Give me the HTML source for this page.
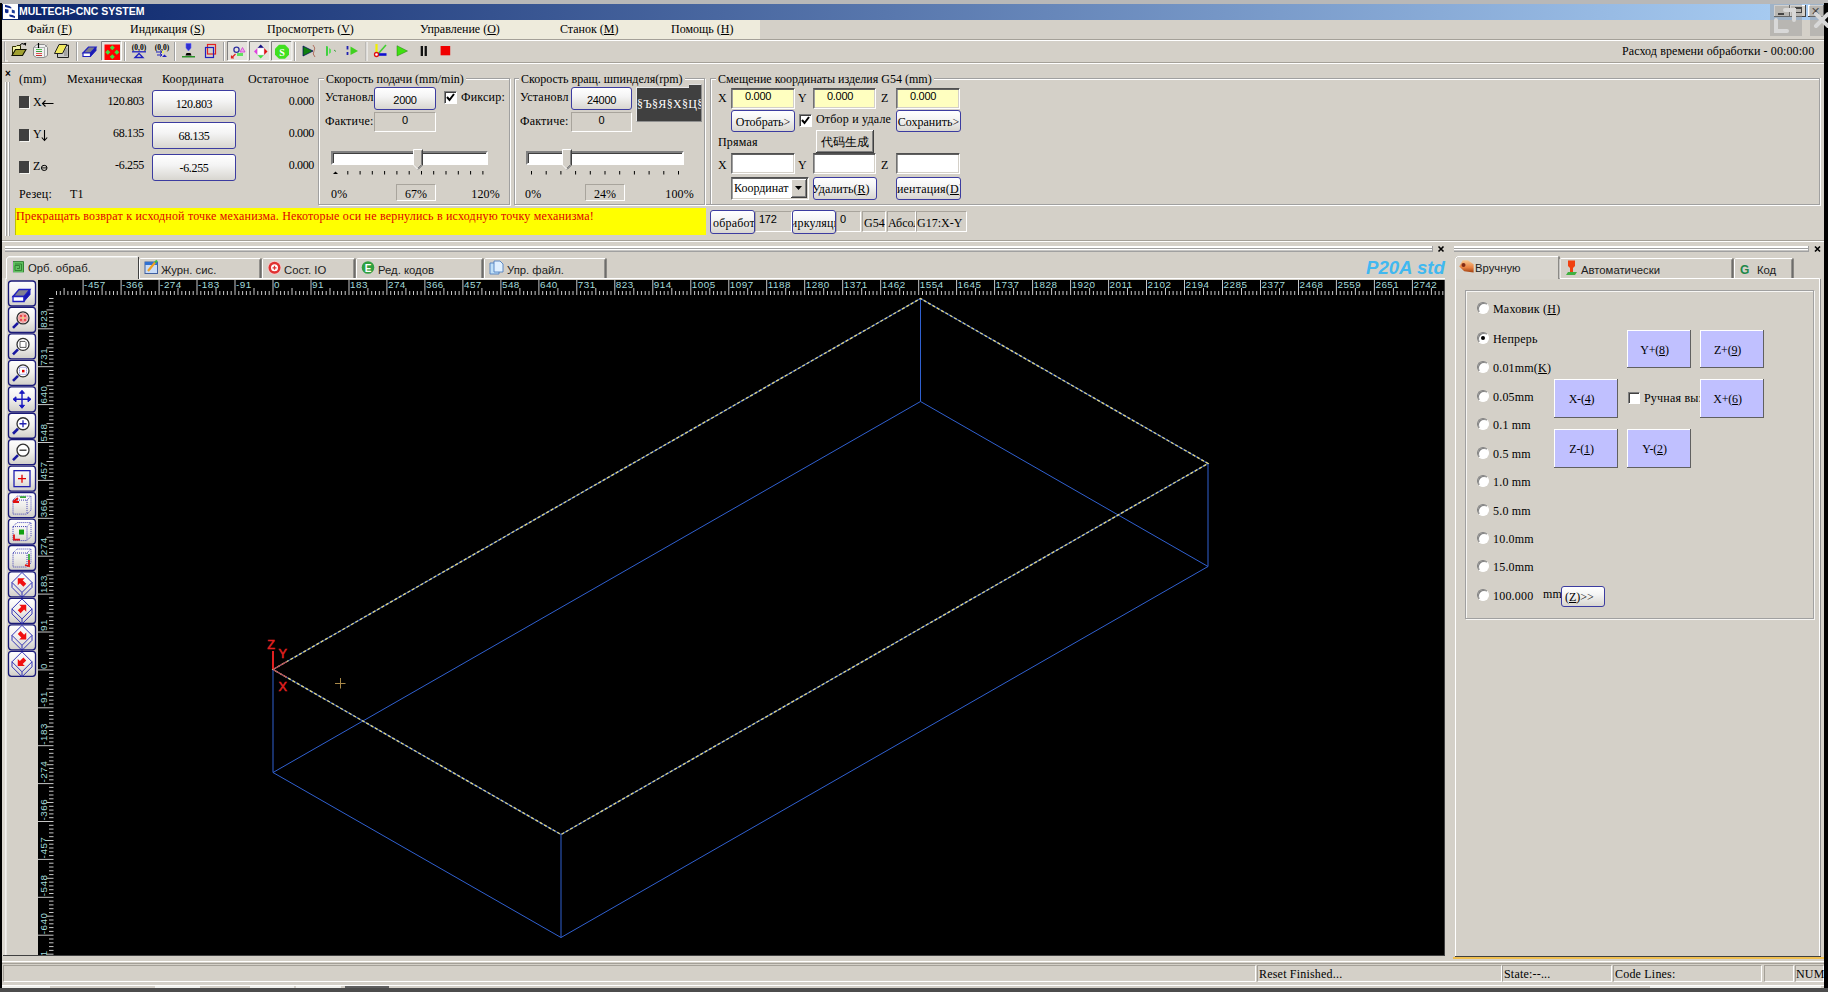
<!DOCTYPE html>
<html><head><meta charset="utf-8">
<style>
*{margin:0;padding:0;box-sizing:border-box}
html,body{width:1828px;height:992px;overflow:hidden;background:#D4D0C8;font-family:"Liberation Serif",serif;font-size:12px;color:#000;position:relative}
.a{position:absolute}
.s{font-family:"Liberation Sans",sans-serif}
.t{position:absolute;white-space:nowrap;line-height:12px;letter-spacing:0.2px}
.t.s{letter-spacing:0}
.hl{position:absolute;height:1px}
.vl{position:absolute;width:1px}
/* rounded blue button */
.rb{position:absolute;border:1px solid #3C3CA0;border-radius:3px;background:linear-gradient(#FFFFFF,#F4F4F4 40%,#D8D6D0);text-align:center;white-space:nowrap;overflow:hidden;line-height:12px}
/* flat sunken field */
.ff{position:absolute;border:1px solid;border-color:#A8A49C #FFFFFF #FFFFFF #A8A49C;text-align:center;white-space:nowrap;overflow:hidden}
/* sunken edit */
.ed{position:absolute;border:1px solid;border-color:#505050 #FFFFFF #FFFFFF #707070;box-shadow:inset 0 1px 0 #606060, inset 1px 0 0 #A0A0A0, inset -1px -1px 0 #D4D0C8;white-space:nowrap;overflow:hidden}
/* raised classic */
.rz{position:absolute;background:#D4D0C8;box-shadow:inset -1px -1px 0 #404040, inset 1px 1px 0 #FFFFFF, inset -2px -2px 0 #808080;text-align:center;white-space:nowrap;overflow:hidden}
/* group box */
.gb{position:absolute;border:1px solid #A0A0A0;box-shadow:1px 1px 0 #FFFFFF, inset 1px 1px 0 #FFFFFF}
.gt{position:absolute;background:#D4D0C8;padding:0 2px;white-space:nowrap;line-height:12px}
/* lavender jog buttons */
.jb{position:absolute;background:#C0C0FF;box-shadow:inset -1px -1px 0 #606060, inset 1px 1px 0 #FFFFFF;text-align:center;white-space:nowrap}
.radio{position:absolute;width:12px;height:12px;border-radius:50%;background:#fff;box-shadow:inset 1px 1px 0 #808080, inset -1px -1px 0 #FFFFFF;border:1px solid;border-color:#808080 #FFFFFF #FFFFFF #808080}
.cb{position:absolute;width:13px;height:13px;background:#fff;border:1px solid;border-color:#808080 #FFFFFF #FFFFFF #808080;box-shadow:inset 1px 1px 0 #404040}

</style></head><body>
<div class="a" style="left:0;top:0;width:1828px;height:4px;background:#B8B8B8"></div>
<div class="a" style="left:0;top:3px;width:2px;height:989px;background:#000"></div>
<div class="a" style="left:1824px;top:3px;width:4px;height:989px;background:#000"></div>
<div class="a" style="left:2px;top:4px;width:1822px;height:16px;background:linear-gradient(90deg,#0A246A 0px,#A6CAF0 1768px)"></div>
<svg class="a" style="left:3px;top:4px" width="15" height="15" viewBox="3 4 15 15"><rect x="3" y="4" width="15" height="15" fill="#fff"/><path d="M5 4.8 L9.5 6 L11.3 7.2 V8.6 L5 7 Z" fill="#102C90"/><path d="M5 9 L8.5 9.6 V12.6 L7 13.2 L5 12.5 Z" fill="#102C90"/><path d="M11.8 9.6 L14.8 10.4 V13.4 L11.8 12.8 Z" fill="#1A3C98"/><path d="M9.2 14.4 L12.5 15 L15 16.2 V18 L9.6 16.6 Z" fill="#102C90"/></svg>
<div class="t s" style="left:19px;top:6px;color:#fff;font-weight:bold;font-size:10.5px;line-height:11px">MULTECH&gt;CNC SYSTEM</div>
<!-- window buttons -->
<div class="a" style="left:1774px;top:5px;width:16px;height:12px;background:#D4D0C8;box-shadow:inset -1px -1px 0 #404040, inset 1px 1px 0 #fff"></div>
<div class="a" style="left:1778px;top:13px;width:6px;height:2px;background:#000"></div>
<div class="a" style="left:1790px;top:5px;width:16px;height:12px;background:#D4D0C8;box-shadow:inset -1px -1px 0 #404040, inset 1px 1px 0 #fff"></div>
<div class="a" style="left:1795px;top:7px;width:7px;height:6px;border:1px solid #000;border-top-width:2px"></div>
<div class="a" style="left:1808px;top:5px;width:16px;height:12px;background:#D4D0C8;box-shadow:inset -1px -1px 0 #404040, inset 1px 1px 0 #fff"></div>
<div class="t s" style="left:1811px;top:5px;font-size:11px;line-height:12px">✕</div>
<!-- overlay restore icon -->
<div class="a" style="left:1770px;top:4px;width:32px;height:32px;background:rgba(150,150,150,0.45)"></div>
<div class="a" style="left:1810px;top:4px;width:14px;height:32px;background:rgba(150,150,150,0.45)"></div>
<svg class="a" style="left:1770px;top:4px;z-index:5" width="58" height="32" viewBox="0 0 58 32"><path d="M6 16 V27 H17 M15 6 H24 V16" stroke="#D8D8D8" stroke-width="4" fill="none" stroke-linecap="round"/><path d="M46 10 L58 22 M58 10 L46 22" stroke="#D8D8D8" stroke-width="4" stroke-linecap="round"/></svg>
<!-- menu bar -->
<div class="a" style="left:2px;top:20px;width:758px;height:19px;background:#EEEBDC"></div>
<div class="hl" style="left:2px;top:39px;width:1822px;background:#A4A098"></div>
<div class="hl" style="left:2px;top:40px;width:1822px;background:#FFFFFF"></div>
<div class="t" style="left:27px;top:23px;letter-spacing:0">Файл (<u>F</u>)</div>
<div class="t" style="left:130px;top:23px;letter-spacing:0">Индикация (<u>S</u>)</div>
<div class="t" style="left:267px;top:23px;letter-spacing:0">Просмотреть (<u>V</u>)</div>
<div class="t" style="left:420px;top:23px;letter-spacing:0">Управление (<u>O</u>)</div>
<div class="t" style="left:560px;top:23px;letter-spacing:0">Станок (<u>M</u>)</div>
<div class="t" style="left:671px;top:23px;letter-spacing:0">Помощь (<u>H</u>)</div>
<!-- toolbar lines -->
<div class="hl" style="left:2px;top:62px;width:1822px;background:#A4A098"></div>
<div class="hl" style="left:2px;top:63px;width:1822px;background:#FFFFFF"></div>
<div class="t" style="left:1622px;top:45px;letter-spacing:0.1px">Расход времени обработки - 00:00:00</div>
<!-- viewport -->
<div class="a" style="left:38px;top:280px;width:1406px;height:675px;background:#000"></div>
<div class="a" style="left:0;top:988px;width:1828px;height:4px;background:#4C4C4C"></div>
<svg class="a" style="left:0;top:40px" width="470" height="24" viewBox="0 40 470 24">
<!-- grip -->
<path d="M5 42 V61 H8" stroke="#FFFFFF" fill="none"/><path d="M4.5 41.5 V61.5" stroke="#A0A0A0"/>
<!-- folder -->
<path d="M12.5 55 V46.5 H16 L17 45.5 H20.5 V50" fill="#F4F4A8" stroke="#303000" stroke-width="1"/>
<path d="M12 55.5 L15.5 49.5 H26 L22.5 55.5 Z" fill="#A0A030" stroke="#101000" stroke-width="1.1"/>
<path d="M19.5 45.5 Q22 42 24.5 44.5" stroke="#000" fill="none" stroke-width="1"/><path d="M23.5 43.2 L25.8 46 L26.2 42.8Z" fill="#000"/>
<!-- bin/printer -->
<path d="M33.5 47.5 L37 44.5 H44.5 L47.5 47.5 V55.5 L44.5 57.5 H36.5 L33.5 55.5 Z" fill="#F0F0F0" stroke="#8C8C8C" stroke-width="1"/>
<path d="M44.5 47.5 V57.5 M33.5 47.5 H44.5 L47.5 44.5" stroke="#A0A0A0" stroke-width="0.8" fill="none"/>
<path d="M36 49.5 H42" stroke="#50C050" stroke-width="1"/><path d="M36 51.5 H42" stroke="#40A040" stroke-width="1"/>
<path d="M36 53.5 H42" stroke="#E05050" stroke-width="1"/><path d="M36 55.5 H42" stroke="#C03030" stroke-width="1"/>
<path d="M38.5 43 V48" stroke="#000" stroke-width="1.2"/>
<!-- notepad -->
<path d="M57.5 49 V57.5 H68.5 V45 Z" fill="#C8C8C8" stroke="#202020" stroke-width="1"/>
<path d="M64 49 H67.5 M64 51 H67.5 M64 53 H67.5 M64 55 H67.5" stroke="#606060" stroke-width="0.7"/>
<path d="M54.5 53.5 L59 44.5 H67 L62.5 53.5 Z" fill="#F0E860" stroke="#202020" stroke-width="1"/>
<!-- separator -->
<path d="M76.5 42 V61" stroke="#A0A0A0"/><path d="M77.5 42 V61" stroke="#FFFFFF"/>
<!-- eraser -->
<path d="M83 53 L88.5 47 H96 L90.5 53 Z" fill="#7C7C8C" stroke="#2020C0" stroke-width="1.2"/>
<path d="M83 53 H90.5 V56.5 H83 Z" fill="#FFFFFF" stroke="#2020C0" stroke-width="1.2"/>
<path d="M90.5 53 L96 47 V50.5 L90.5 56.5 Z" fill="#1818B0" stroke="#2020C0" stroke-width="1"/>
<!-- pressed red -->
<rect x="101" y="41" width="20" height="20" fill="#E4E2DC"/>
<path d="M101.5 60.5 V41.5 H120.5" stroke="#808080" fill="none"/><path d="M101.5 60.5 H121.5 V41.5" stroke="#FFFFFF" fill="none"/>
<rect x="104.5" y="44.5" width="15.5" height="15.5" fill="#FF0000"/>
<path d="M112.3 45.3 L114.8 47.8 L112.3 50.3 L109.8 47.8Z M112.3 54.3 L114.8 56.8 L112.3 59.3 L109.8 56.8Z M107.8 49.8 L110.3 52.3 L107.8 54.8 L105.3 52.3Z M116.8 49.8 L119.3 52.3 L116.8 54.8 L114.3 52.3Z" fill="#40E040"/>
<!-- separator -->
<path d="M124.5 42 V61" stroke="#A0A0A0"/><path d="M125.5 42 V61" stroke="#FFFFFF"/>
<!-- (0,0) 1 -->
<text x="139" y="50" font-family="Liberation Serif" font-weight="bold" font-size="7.5" text-anchor="middle">(0,0)</text>
<path d="M132 51.8 H146" stroke="#2020C0" stroke-width="1.3"/>
<path d="M135 57.5 L139 53.5 L143 57.5 Z" fill="none" stroke="#2020C0" stroke-width="1.3"/>
<!-- (0,0) 2 -->
<text x="162" y="50" font-family="Liberation Serif" font-weight="bold" font-size="7.5" text-anchor="middle">(0,0)</text>
<path d="M156 52 H162 M160 50.5 L162 52 L160 53.5 M157 55 H162 M160 53.5 L162 55 L160 56.5" stroke="#2020C0" stroke-width="1" fill="none"/>
<path d="M162 57 L164.5 54.5 L167 57 Z" fill="#2020C0"/><circle cx="163" cy="52" r="1.2" fill="#F0F060"/>
<!-- separator -->
<path d="M174.5 42 V61" stroke="#A0A0A0"/><path d="M175.5 42 V61" stroke="#FFFFFF"/>
<!-- tool -->
<path d="M186 43.5 H191 V48 L188.5 51 L186 48 Z" fill="#3030D0" stroke="#6060FF" stroke-width="0.6"/>
<path d="M185.5 55.5 L186.5 53 H190.5 L191.5 55.5 Z" fill="#000"/>
<path d="M182 56.8 H195" stroke="#008000" stroke-width="1.2"/>
<!-- copy -->
<rect x="207.5" y="44.5" width="8" height="9.5" fill="none" stroke="#E02020" stroke-width="1.2"/>
<rect x="205.5" y="47.5" width="8" height="10" fill="none" stroke="#2020C0" stroke-width="1.2"/>
<!-- separator / grip -->
<path d="M223.5 42 V61" stroke="#A0A0A0"/><path d="M224.5 42 V61" stroke="#FFFFFF"/>
<!-- pressed group -->
<rect x="227" y="41" width="21" height="20" fill="#E4E2DC"/><path d="M227.5 60.5 V41.5 H247.5" stroke="#808080" fill="none"/><path d="M227.5 60.5 H248 V41" stroke="#FFFFFF" fill="none"/>
<rect x="249" y="41" width="21" height="20" fill="#E4E2DC"/><path d="M249.5 60.5 V41.5 H269.5" stroke="#808080" fill="none"/><path d="M249.5 60.5 H270 V41" stroke="#FFFFFF" fill="none"/>
<rect x="271" y="41" width="21" height="20" fill="#E4E2DC"/><path d="M271.5 60.5 V41.5 H291.5" stroke="#808080" fill="none"/><path d="M271.5 60.5 H292 V41" stroke="#FFFFFF" fill="none"/>
<circle cx="236.5" cy="49.8" r="2.6" fill="none" stroke="#3030A0" stroke-width="1.3"/>
<path d="M240 52 L242.5 47.5 L245 52 Z" fill="#F0A0F0" stroke="#D040D0" stroke-width="0.8"/>
<rect x="237" y="53" width="6" height="3" fill="#60E060"/>
<path d="M235.5 54 L231.5 58 M231.5 55.5 V58 H234" stroke="#E02020" stroke-width="1.2" fill="none"/>
<path d="M260.7 44.5 L264 48 H257.5 Z" fill="#101080"/>
<path d="M257.5 48 L254 51.5 L257.5 55 Z" fill="#E040E0"/>
<path d="M264 48 L267.5 51.5 L264 55 Z" fill="#E01010"/>
<path d="M257.5 55 H264 L260.7 58.5 Z" fill="#40E040"/>
<rect x="257.5" y="48" width="6.5" height="7" fill="#FFFFFF" stroke="#E0C0E0" stroke-width="0.5"/>
<path d="M279 44.8 H285 L289 48.8 V54.8 L285 58.8 H279 L275 54.8 V48.8 Z" fill="#40E020"/>
<text x="282" y="56" font-family="Liberation Serif" font-weight="bold" font-size="10" fill="#fff" text-anchor="middle">S</text>
<!-- separator -->
<path d="M294.5 42 V61" stroke="#A0A0A0"/><path d="M295.5 42 V61" stroke="#FFFFFF"/>
<!-- play wave -->
<path d="M303 46 L313 51 L303 56 Z" fill="#108010" stroke="#000060" stroke-width="0.7"/>
<path d="M313 45 Q316 48 314 51 Q312 54 315 57" stroke="#B07060" stroke-width="1" fill="none"/>
<!-- step -->
<path d="M326 46 L328 46.5 V55.5 L326 56 Z" fill="#40D040"/><path d="M329 48 L331 49.5 V52.5 L329 54Z" fill="#60E060"/><path d="M334 50 L336 51.5" stroke="#40A040"/>
<!-- dashed play -->
<path d="M347.5 46 V49.5 M347.5 52 V55" stroke="#2020B0" stroke-width="1.8"/>
<path d="M350.5 46.5 L358 51 L350.5 55 Z" fill="#40D020"/>
<!-- separator -->
<path d="M366 42 V61" stroke="#A0A0A0"/><path d="M367 42 V61" stroke="#FFFFFF"/>
<!-- axis -->
<path d="M376.5 44 V54" stroke="#F0F000" stroke-width="2.2"/>
<path d="M378 54 L386 45" stroke="#40D030" stroke-width="1.6"/>
<path d="M378 54.5 H386.5" stroke="#1010D0" stroke-width="2.6"/>
<circle cx="376.5" cy="54.5" r="2" fill="#fff" stroke="#E01010" stroke-width="1.3"/>
<!-- play -->
<path d="M397 45.7 L407.5 51 L397 56 Z" fill="#40E010" stroke="#208010" stroke-width="0.5"/>
<!-- pause -->
<rect x="420.7" y="46" width="2.3" height="10" fill="#101010"/><rect x="424.6" y="46" width="2.3" height="10" fill="#101010"/>
<!-- stop -->
<rect x="440.6" y="46" width="9.6" height="9.3" fill="#F00000"/>
</svg>
<div class="t s" style="left:5px;top:68px;font-size:10px;font-weight:bold">×</div>
<div class="vl" style="left:5px;top:82px;height:154px;background:#FFFFFF"></div>
<div class="vl" style="left:6px;top:82px;height:154px;background:#A0A0A0"></div>
<div class="vl" style="left:8px;top:82px;height:154px;background:#FFFFFF"></div>
<div class="vl" style="left:9px;top:82px;height:154px;background:#A0A0A0"></div>
<div class="t" style="left:19px;top:73px">(mm)</div>
<div class="t" style="left:67px;top:73px">Механическая</div>
<div class="t" style="left:162px;top:73px">Координата</div>
<div class="t" style="left:248px;top:73px">Остаточное</div>
<!-- rows -->
<div class="a" style="left:19px;top:96px;width:10px;height:12px;background:#404040;box-shadow:1px 1px 0 #F4F4F0"></div>
<div class="a" style="left:19px;top:129px;width:10px;height:12px;background:#404040;box-shadow:1px 1px 0 #F4F4F0"></div>
<div class="a" style="left:19px;top:161px;width:10px;height:12px;background:#404040;box-shadow:1px 1px 0 #F4F4F0"></div>
<div class="t" style="left:33px;top:96px">X</div><svg class="a" style="left:41px;top:98px" width="14" height="12"><path d="M1.5 5.5 H12.5 M4.5 2.5 L1.5 5.5 L4.5 8.5" stroke="#000" stroke-width="1.1" fill="none"/></svg>
<div class="t" style="left:33px;top:128px">Y</div><svg class="a" style="left:41px;top:129px" width="8" height="13"><path d="M3.5 1 V11.5 M0.8 8.5 L3.5 11.5 L6.2 8.5" stroke="#000" stroke-width="1.1" fill="none"/></svg>
<div class="t" style="left:33px;top:160px">Z</div><svg class="a" style="left:40px;top:164px" width="9" height="8"><ellipse cx="4.2" cy="3.9" rx="2.8" ry="2.6" stroke="#000" stroke-width="1" fill="none"/><path d="M1.5 3.9 H7" stroke="#000" stroke-width="0.9"/></svg>
<div class="t" style="left:84px;width:60px;text-align:right;top:95px;letter-spacing:-0.35px">120.803</div>
<div class="t" style="left:84px;width:60px;text-align:right;top:127px;letter-spacing:-0.35px">68.135</div>
<div class="t" style="left:84px;width:60px;text-align:right;top:159px;letter-spacing:-0.35px">-6.255</div>
<div class="rb" style="left:152px;top:90px;width:84px;height:27px;padding-top:7px;letter-spacing:-0.35px">120.803</div>
<div class="rb" style="left:152px;top:122px;width:84px;height:27px;padding-top:7px;letter-spacing:-0.35px">68.135</div>
<div class="rb" style="left:152px;top:154px;width:84px;height:27px;padding-top:7px;letter-spacing:-0.35px">-6.255</div>
<div class="t" style="left:254px;width:60px;text-align:right;top:95px;letter-spacing:-0.35px">0.000</div>
<div class="t" style="left:254px;width:60px;text-align:right;top:127px;letter-spacing:-0.35px">0.000</div>
<div class="t" style="left:254px;width:60px;text-align:right;top:159px;letter-spacing:-0.35px">0.000</div>
<div class="t" style="left:19px;top:188px">Резец:</div>
<div class="t" style="left:70px;top:188px">T1</div>
<!-- yellow message -->
<div class="a" style="left:15px;top:208px;width:691px;height:27px;background:#FFFF00;border-left:1px solid #C0C000"></div>
<div class="t" style="left:16px;top:210px;color:#E00000">Прекращать возврат к исходной точке механизма. Некоторые оси не вернулись в исходную точку механизма!</div>
<!-- main group right border -->
<div class="vl" style="left:1819px;top:78px;height:127px;background:#A0A0A0"></div>
<div class="vl" style="left:1820px;top:78px;height:127px;background:#FFFFFF"></div>
<div class="hl" style="left:960px;top:78px;width:860px;background:#A0A0A0"></div>
<div class="hl" style="left:960px;top:79px;width:860px;background:#FFFFFF"></div>
<div class="hl" style="left:706px;top:204px;width:1114px;background:#A0A0A0"></div>
<div class="hl" style="left:706px;top:205px;width:1114px;background:#FFFFFF"></div>
<!-- panel bottom line -->
<div class="hl" style="left:2px;top:240px;width:1822px;background:#A4A098"></div>
<div class="hl" style="left:2px;top:241px;width:1822px;background:#FFFFFF"></div>
<!-- feed group -->
<div class="gb" style="left:318px;top:78px;width:192px;height:127px"></div>
<div class="gt" style="left:324px;top:73px">Скорость подачи (mm/min)</div>
<div class="t" style="left:325px;top:91px">Установл</div>
<div class="rb" style="left:374px;top:87px;width:62px;height:23px;padding-top:6px;font-family:'Liberation Sans',sans-serif;font-size:11px;letter-spacing:-0.3px;">2000</div>
<div class="cb" style="left:444px;top:91px"></div>
<svg class="a" style="left:444px;top:91px" width="13" height="13"><path d="M3 6 L5.5 9 L10 3" stroke="#000" stroke-width="2" fill="none"/></svg>
<div class="t" style="left:461px;top:91px">Фиксир:</div>
<div class="t" style="left:325px;top:115px">Фактиче:</div>
<div class="ff" style="left:374px;top:112px;width:62px;height:20px;padding-top:1px;font-family:'Liberation Sans',sans-serif;font-size:11px;letter-spacing:-0.3px;">0</div>
<!-- slider1 -->
<div class="a" style="left:331px;top:151px;width:157px;height:14px;background:#fff;border:2px solid;border-color:#808080 #fff #fff #808080;box-shadow:inset 1px 1px 0 #404040"></div>
<svg class="a" style="left:412px;top:148px" width="13" height="24"><path d="M1.5 1.5 H10.5 V17 L6 21.5 L1.5 17 Z" fill="#D4D0C8" stroke="#fff"/><path d="M10.5 1.5 V17 L6 21.5" stroke="#404040" fill="none"/><path d="M9.5 2.5 V16.5 L6 20" stroke="#808080" fill="none"/></svg>
<svg class="a" style="left:330px;top:170px" width="160" height="6"><path d="M5.5 1.5 L3 4 H8 Z" fill="#000"/><path d="M17.8 1 V4.5 M30.1 1 V4.5 M42.3 1 V4.5 M54.6 1 V4.5 M66.9 1 V4.5 M79.2 1 V4.5 M91.5 1 V4.5 M103.7 1 V4.5 M116.0 1 V4.5 M128.3 1 V4.5 M140.6 1 V4.5 M152.9 1 V4.5" stroke="#000" stroke-width="1"/></svg>
<div class="t" style="left:331px;top:188px">0%</div>
<div class="ff" style="left:396px;top:184px;width:40px;height:17px;padding-top:2px">67%</div>
<div class="t" style="left:470px;width:30px;text-align:right;top:188px">120%</div>
<!-- spindle group -->
<div class="gb" style="left:514px;top:78px;width:191px;height:127px"></div>
<div class="gt" style="left:519px;top:73px">Скорость вращ. шпинделя(rpm)</div>
<div class="t" style="left:520px;top:91px">Установл</div>
<div class="rb" style="left:571px;top:87px;width:61px;height:23px;padding-top:6px;font-family:'Liberation Sans',sans-serif;font-size:11px;letter-spacing:-0.3px;">24000</div>
<div class="a" style="left:636px;top:87px;width:66px;height:35px;background:#404040;border:1px solid;border-color:#E8E8E8 #909090 #909090 #E8E8E8;overflow:hidden"><div class="t" style="left:0px;top:10px;color:#fff;letter-spacing:0.3px">§Ъ§Я§Х§Ц§</div></div><div class="a" style="left:689px;top:84px;width:13px;height:4px;background:#404040;border-top:1px solid #E0E0E0;border-right:1px solid #909090"></div>
<div class="t" style="left:520px;top:115px">Фактиче:</div>
<div class="ff" style="left:571px;top:112px;width:61px;height:20px;padding-top:1px;font-family:'Liberation Sans',sans-serif;font-size:11px;letter-spacing:-0.3px;">0</div>
<!-- slider2 -->
<div class="a" style="left:526px;top:151px;width:158px;height:14px;background:#fff;border:2px solid;border-color:#808080 #fff #fff #808080;box-shadow:inset 1px 1px 0 #404040"></div>
<svg class="a" style="left:561px;top:148px" width="13" height="24"><path d="M1.5 1.5 H10.5 V17 L6 21.5 L1.5 17 Z" fill="#D4D0C8" stroke="#fff"/><path d="M10.5 1.5 V17 L6 21.5" stroke="#404040" fill="none"/><path d="M9.5 2.5 V16.5 L6 20" stroke="#808080" fill="none"/></svg>
<svg class="a" style="left:526px;top:170px" width="160" height="6"><path d="M5.5 1 V4.5 M20.2 1 V4.5 M34.9 1 V4.5 M49.6 1 V4.5 M64.3 1 V4.5 M79.0 1 V4.5 M93.7 1 V4.5 M108.4 1 V4.5 M123.1 1 V4.5 M137.8 1 V4.5 M152.5 1 V4.5" stroke="#000" stroke-width="1"/></svg>
<div class="t" style="left:525px;top:188px">0%</div>
<div class="ff" style="left:585px;top:184px;width:40px;height:17px;padding-top:2px">24%</div>
<div class="t" style="left:660px;width:34px;text-align:right;top:188px">100%</div>
<!-- G54 group -->
<div class="gb" style="left:710px;top:78px;width:1110px;height:127px"></div>
<div class="gt" style="left:716px;top:73px">Смещение координаты изделия G54 (mm)</div>
<div class="t" style="left:718px;top:92px">X</div>
<div class="t" style="left:798px;top:92px">Y</div>
<div class="t" style="left:881px;top:92px">Z</div>
<div class="ed" style="left:731px;top:88px;width:64px;height:21px;background:#FFFFC0;padding:1px 0 0 13px;font-family:'Liberation Sans',sans-serif;font-size:11px;letter-spacing:-0.3px;">0.000</div>
<div class="ed" style="left:813px;top:88px;width:63px;height:21px;background:#FFFFC0;padding:1px 0 0 13px;font-family:'Liberation Sans',sans-serif;font-size:11px;letter-spacing:-0.3px;">0.000</div>
<div class="ed" style="left:896px;top:88px;width:64px;height:21px;background:#FFFFC0;padding:1px 0 0 13px;font-family:'Liberation Sans',sans-serif;font-size:11px;letter-spacing:-0.3px;">0.000</div>
<div class="rb" style="left:731px;top:110px;width:64px;height:22px;padding-top:5px">Отобрать&gt;</div>
<div class="cb" style="left:799px;top:114px"></div>
<svg class="a" style="left:799px;top:114px" width="13" height="13"><path d="M3 6 L5.5 9 L10 3" stroke="#000" stroke-width="2" fill="none"/></svg>
<div class="t" style="left:816px;top:113px">Отбор и удале</div>
<div class="rb" style="left:896px;top:110px;width:65px;height:22px;padding-top:5px">Сохранить&gt;</div>
<div class="t" style="left:718px;top:136px">Прямая</div>
<div class="rz" style="left:816px;top:130px;width:58px;height:23px;padding-top:4px;font-family:'Liberation Sans',sans-serif">代码生成</div>
<div class="t" style="left:718px;top:159px">X</div>
<div class="t" style="left:798px;top:159px">Y</div>
<div class="t" style="left:881px;top:159px">Z</div>
<div class="ed" style="left:731px;top:153px;width:64px;height:21px;background:#fff"></div>
<div class="ed" style="left:813px;top:153px;width:63px;height:21px;background:#fff"></div>
<div class="ed" style="left:896px;top:153px;width:64px;height:21px;background:#fff"></div>
<div class="ed" style="left:731px;top:177px;width:78px;height:23px;background:#fff;padding:3px 0 0 2px">Координат</div>
<div class="rz" style="left:791px;top:179px;width:16px;height:19px"></div>
<svg class="a" style="left:795px;top:186px" width="8" height="5"><path d="M0 0 H7 L3.5 4 Z" fill="#000"/></svg>
<div class="rb" style="left:813px;top:177px;width:64px;height:23px;padding-top:5px;text-align:left;text-indent:-2px">Удалить(<u>R</u>)</div>
<div class="rb" style="left:896px;top:177px;width:65px;height:23px"><span class="t" style="left:calc(50% - 6px);top:5px;transform:translateX(-50%)">Ориентация(<u>D</u>)</span></div>
<!-- bottom row -->
<div class="rb" style="left:710px;top:210px;width:45px;height:24px"><span class="t" style="left:2px;top:6px">обработки</span></div>
<div class="ff" style="left:755px;top:211px;width:37px;height:21px;text-align:left;padding:1px 0 0 3px;font-family:'Liberation Sans',sans-serif;font-size:11px;letter-spacing:-0.3px;">172</div>
<div class="rb" style="left:792px;top:210px;width:44px;height:24px"><span class="t" style="left:50%;top:6px;transform:translateX(-50%)">Циркуляция</span></div>
<div class="ff" style="left:836px;top:211px;width:25px;height:21px;text-align:left;padding:1px 0 0 3px;font-family:'Liberation Sans',sans-serif;font-size:11px;letter-spacing:-0.3px;">0</div>
<div class="ff" style="left:862px;top:211px;width:24px;height:21px;padding-top:4px;text-align:left;text-indent:1px">G54</div>
<div class="ff" style="left:887px;top:211px;width:29px;height:21px;padding-top:4px;text-align:left">Абсолют</div>
<div class="ff" style="left:916px;top:211px;width:51px;height:21px;padding-top:4px;text-align:left">G17:X-Y</div>
<svg class="a" style="left:0;top:242px" width="1828" height="16">
<rect x="5" y="4" width="1428" height="2" fill="#FFFFFF"/><rect x="5" y="6" width="1428" height="1" fill="#A0A0A0"/>
<rect x="5" y="7" width="1428" height="1.5" fill="#FFFFFF"/><rect x="5" y="8.5" width="1428" height="1.5" fill="#A0A0A0"/>
<rect x="1432" y="4" width="1" height="6" fill="#A0A0A0"/>
<rect x="1454" y="4" width="355" height="2" fill="#FFFFFF"/><rect x="1454" y="6" width="355" height="1" fill="#A0A0A0"/>
<rect x="1454" y="7" width="355" height="1.5" fill="#FFFFFF"/><rect x="1454" y="8.5" width="355" height="1.5" fill="#A0A0A0"/>
<rect x="1808" y="4" width="1" height="6" fill="#A0A0A0"/>
<path d="M1438.5 4.5 L1443.5 9.5 M1443.5 4.5 L1438.5 9.5" stroke="#000" stroke-width="1.6"/>
<path d="M1815 4.5 L1820 9.5 M1820 4.5 L1815 9.5" stroke="#000" stroke-width="1.6"/>
</svg>
<svg class="a" style="left:38px;top:280px" width="1406" height="675" viewBox="38 280 1406 675">
<rect x="38" y="280" width="1406" height="675" fill="#000"/>
<path d="M56.5 291 V295 M60.3 291 V295 M64.1 288 V295 M67.9 291 V295 M71.7 291 V295 M75.5 291 V295 M79.3 291 V295 M83.1 280 V295 M86.9 291 V295 M90.7 291 V295 M94.5 291 V295 M98.3 291 V295 M102.1 288 V295 M105.9 291 V295 M109.7 291 V295 M113.5 291 V295 M117.3 291 V295 M121.1 280 V295 M124.9 291 V295 M128.7 291 V295 M132.5 291 V295 M136.3 291 V295 M140.1 288 V295 M143.9 291 V295 M147.7 291 V295 M151.5 291 V295 M155.3 291 V295 M159.1 280 V295 M162.9 291 V295 M166.7 291 V295 M170.5 291 V295 M174.3 291 V295 M178.0 288 V295 M181.8 291 V295 M185.6 291 V295 M189.4 291 V295 M193.2 291 V295 M197.0 280 V295 M200.8 291 V295 M204.6 291 V295 M208.4 291 V295 M212.2 291 V295 M216.0 288 V295 M219.8 291 V295 M223.6 291 V295 M227.4 291 V295 M231.2 291 V295 M235.0 280 V295 M238.8 291 V295 M242.6 291 V295 M246.4 291 V295 M250.2 291 V295 M254.0 288 V295 M257.8 291 V295 M261.6 291 V295 M265.4 291 V295 M269.2 291 V295 M273.0 280 V295 M276.8 291 V295 M280.6 291 V295 M284.4 291 V295 M288.2 291 V295 M292.0 288 V295 M295.8 291 V295 M299.6 291 V295 M303.4 291 V295 M307.2 291 V295 M311.0 280 V295 M314.8 291 V295 M318.6 291 V295 M322.4 291 V295 M326.2 291 V295 M330.0 288 V295 M333.8 291 V295 M337.6 291 V295 M341.4 291 V295 M345.2 291 V295 M349.0 280 V295 M352.8 291 V295 M356.6 291 V295 M360.4 291 V295 M364.2 291 V295 M367.9 288 V295 M371.7 291 V295 M375.5 291 V295 M379.3 291 V295 M383.1 291 V295 M386.9 280 V295 M390.7 291 V295 M394.5 291 V295 M398.3 291 V295 M402.1 291 V295 M405.9 288 V295 M409.7 291 V295 M413.5 291 V295 M417.3 291 V295 M421.1 291 V295 M424.9 280 V295 M428.7 291 V295 M432.5 291 V295 M436.3 291 V295 M440.1 291 V295 M443.9 288 V295 M447.7 291 V295 M451.5 291 V295 M455.3 291 V295 M459.1 291 V295 M462.9 280 V295 M466.7 291 V295 M470.5 291 V295 M474.3 291 V295 M478.1 291 V295 M481.9 288 V295 M485.7 291 V295 M489.5 291 V295 M493.3 291 V295 M497.1 291 V295 M500.9 280 V295 M504.7 291 V295 M508.5 291 V295 M512.3 291 V295 M516.1 291 V295 M519.9 288 V295 M523.7 291 V295 M527.5 291 V295 M531.3 291 V295 M535.1 291 V295 M538.9 280 V295 M542.7 291 V295 M546.5 291 V295 M550.3 291 V295 M554.1 291 V295 M557.9 288 V295 M561.6 291 V295 M565.4 291 V295 M569.2 291 V295 M573.0 291 V295 M576.8 280 V295 M580.6 291 V295 M584.4 291 V295 M588.2 291 V295 M592.0 291 V295 M595.8 288 V295 M599.6 291 V295 M603.4 291 V295 M607.2 291 V295 M611.0 291 V295 M614.8 280 V295 M618.6 291 V295 M622.4 291 V295 M626.2 291 V295 M630.0 291 V295 M633.8 288 V295 M637.6 291 V295 M641.4 291 V295 M645.2 291 V295 M649.0 291 V295 M652.8 280 V295 M656.6 291 V295 M660.4 291 V295 M664.2 291 V295 M668.0 291 V295 M671.8 288 V295 M675.6 291 V295 M679.4 291 V295 M683.2 291 V295 M687.0 291 V295 M690.8 280 V295 M694.6 291 V295 M698.4 291 V295 M702.2 291 V295 M706.0 291 V295 M709.8 288 V295 M713.6 291 V295 M717.4 291 V295 M721.2 291 V295 M725.0 291 V295 M728.8 280 V295 M732.6 291 V295 M736.4 291 V295 M740.2 291 V295 M744.0 291 V295 M747.7 288 V295 M751.5 291 V295 M755.3 291 V295 M759.1 291 V295 M762.9 291 V295 M766.7 280 V295 M770.5 291 V295 M774.3 291 V295 M778.1 291 V295 M781.9 291 V295 M785.7 288 V295 M789.5 291 V295 M793.3 291 V295 M797.1 291 V295 M800.9 291 V295 M804.7 280 V295 M808.5 291 V295 M812.3 291 V295 M816.1 291 V295 M819.9 291 V295 M823.7 288 V295 M827.5 291 V295 M831.3 291 V295 M835.1 291 V295 M838.9 291 V295 M842.7 280 V295 M846.5 291 V295 M850.3 291 V295 M854.1 291 V295 M857.9 291 V295 M861.7 288 V295 M865.5 291 V295 M869.3 291 V295 M873.1 291 V295 M876.9 291 V295 M880.7 280 V295 M884.5 291 V295 M888.3 291 V295 M892.1 291 V295 M895.9 291 V295 M899.7 288 V295 M903.5 291 V295 M907.3 291 V295 M911.1 291 V295 M914.9 291 V295 M918.7 280 V295 M922.5 291 V295 M926.3 291 V295 M930.1 291 V295 M933.9 291 V295 M937.6 288 V295 M941.4 291 V295 M945.2 291 V295 M949.0 291 V295 M952.8 291 V295 M956.6 280 V295 M960.4 291 V295 M964.2 291 V295 M968.0 291 V295 M971.8 291 V295 M975.6 288 V295 M979.4 291 V295 M983.2 291 V295 M987.0 291 V295 M990.8 291 V295 M994.6 280 V295 M998.4 291 V295 M1002.2 291 V295 M1006.0 291 V295 M1009.8 291 V295 M1013.6 288 V295 M1017.4 291 V295 M1021.2 291 V295 M1025.0 291 V295 M1028.8 291 V295 M1032.6 280 V295 M1036.4 291 V295 M1040.2 291 V295 M1044.0 291 V295 M1047.8 291 V295 M1051.6 288 V295 M1055.4 291 V295 M1059.2 291 V295 M1063.0 291 V295 M1066.8 291 V295 M1070.6 280 V295 M1074.4 291 V295 M1078.2 291 V295 M1082.0 291 V295 M1085.8 291 V295 M1089.6 288 V295 M1093.4 291 V295 M1097.2 291 V295 M1101.0 291 V295 M1104.8 291 V295 M1108.6 280 V295 M1112.4 291 V295 M1116.2 291 V295 M1120.0 291 V295 M1123.8 291 V295 M1127.5 288 V295 M1131.3 291 V295 M1135.1 291 V295 M1138.9 291 V295 M1142.7 291 V295 M1146.5 280 V295 M1150.3 291 V295 M1154.1 291 V295 M1157.9 291 V295 M1161.7 291 V295 M1165.5 288 V295 M1169.3 291 V295 M1173.1 291 V295 M1176.9 291 V295 M1180.7 291 V295 M1184.5 280 V295 M1188.3 291 V295 M1192.1 291 V295 M1195.9 291 V295 M1199.7 291 V295 M1203.5 288 V295 M1207.3 291 V295 M1211.1 291 V295 M1214.9 291 V295 M1218.7 291 V295 M1222.5 280 V295 M1226.3 291 V295 M1230.1 291 V295 M1233.9 291 V295 M1237.7 291 V295 M1241.5 288 V295 M1245.3 291 V295 M1249.1 291 V295 M1252.9 291 V295 M1256.7 291 V295 M1260.5 280 V295 M1264.3 291 V295 M1268.1 291 V295 M1271.9 291 V295 M1275.7 291 V295 M1279.5 288 V295 M1283.3 291 V295 M1287.1 291 V295 M1290.9 291 V295 M1294.7 291 V295 M1298.5 280 V295 M1302.3 291 V295 M1306.1 291 V295 M1309.9 291 V295 M1313.7 291 V295 M1317.4 288 V295 M1321.2 291 V295 M1325.0 291 V295 M1328.8 291 V295 M1332.6 291 V295 M1336.4 280 V295 M1340.2 291 V295 M1344.0 291 V295 M1347.8 291 V295 M1351.6 291 V295 M1355.4 288 V295 M1359.2 291 V295 M1363.0 291 V295 M1366.8 291 V295 M1370.6 291 V295 M1374.4 280 V295 M1378.2 291 V295 M1382.0 291 V295 M1385.8 291 V295 M1389.6 291 V295 M1393.4 288 V295 M1397.2 291 V295 M1401.0 291 V295 M1404.8 291 V295 M1408.6 291 V295 M1412.4 280 V295 M1416.2 291 V295 M1420.0 291 V295 M1423.8 291 V295 M1427.6 291 V295 M1431.4 288 V295 M1435.2 291 V295 M1439.0 291 V295 M1442.8 291 V295" stroke="#C8C8C8" stroke-width="1" fill="none"/>
<text x="84.1" y="288.3" font-family="Liberation Sans" font-size="9.9" letter-spacing="0.5" fill="#A4DCDC">-457</text>
<text x="122.1" y="288.3" font-family="Liberation Sans" font-size="9.9" letter-spacing="0.5" fill="#A4DCDC">-366</text>
<text x="160.1" y="288.3" font-family="Liberation Sans" font-size="9.9" letter-spacing="0.5" fill="#A4DCDC">-274</text>
<text x="198.0" y="288.3" font-family="Liberation Sans" font-size="9.9" letter-spacing="0.5" fill="#A4DCDC">-183</text>
<text x="236.0" y="288.3" font-family="Liberation Sans" font-size="9.9" letter-spacing="0.5" fill="#A4DCDC">-91</text>
<text x="274.0" y="288.3" font-family="Liberation Sans" font-size="9.9" letter-spacing="0.5" fill="#A4DCDC">0</text>
<text x="312.0" y="288.3" font-family="Liberation Sans" font-size="9.9" letter-spacing="0.5" fill="#A4DCDC">91</text>
<text x="350.0" y="288.3" font-family="Liberation Sans" font-size="9.9" letter-spacing="0.5" fill="#A4DCDC">183</text>
<text x="387.9" y="288.3" font-family="Liberation Sans" font-size="9.9" letter-spacing="0.5" fill="#A4DCDC">274</text>
<text x="425.9" y="288.3" font-family="Liberation Sans" font-size="9.9" letter-spacing="0.5" fill="#A4DCDC">366</text>
<text x="463.9" y="288.3" font-family="Liberation Sans" font-size="9.9" letter-spacing="0.5" fill="#A4DCDC">457</text>
<text x="501.9" y="288.3" font-family="Liberation Sans" font-size="9.9" letter-spacing="0.5" fill="#A4DCDC">548</text>
<text x="539.9" y="288.3" font-family="Liberation Sans" font-size="9.9" letter-spacing="0.5" fill="#A4DCDC">640</text>
<text x="577.8" y="288.3" font-family="Liberation Sans" font-size="9.9" letter-spacing="0.5" fill="#A4DCDC">731</text>
<text x="615.8" y="288.3" font-family="Liberation Sans" font-size="9.9" letter-spacing="0.5" fill="#A4DCDC">823</text>
<text x="653.8" y="288.3" font-family="Liberation Sans" font-size="9.9" letter-spacing="0.5" fill="#A4DCDC">914</text>
<text x="691.8" y="288.3" font-family="Liberation Sans" font-size="9.9" letter-spacing="0.5" fill="#A4DCDC">1005</text>
<text x="729.8" y="288.3" font-family="Liberation Sans" font-size="9.9" letter-spacing="0.5" fill="#A4DCDC">1097</text>
<text x="767.7" y="288.3" font-family="Liberation Sans" font-size="9.9" letter-spacing="0.5" fill="#A4DCDC">1188</text>
<text x="805.7" y="288.3" font-family="Liberation Sans" font-size="9.9" letter-spacing="0.5" fill="#A4DCDC">1280</text>
<text x="843.7" y="288.3" font-family="Liberation Sans" font-size="9.9" letter-spacing="0.5" fill="#A4DCDC">1371</text>
<text x="881.7" y="288.3" font-family="Liberation Sans" font-size="9.9" letter-spacing="0.5" fill="#A4DCDC">1462</text>
<text x="919.7" y="288.3" font-family="Liberation Sans" font-size="9.9" letter-spacing="0.5" fill="#A4DCDC">1554</text>
<text x="957.6" y="288.3" font-family="Liberation Sans" font-size="9.9" letter-spacing="0.5" fill="#A4DCDC">1645</text>
<text x="995.6" y="288.3" font-family="Liberation Sans" font-size="9.9" letter-spacing="0.5" fill="#A4DCDC">1737</text>
<text x="1033.6" y="288.3" font-family="Liberation Sans" font-size="9.9" letter-spacing="0.5" fill="#A4DCDC">1828</text>
<text x="1071.6" y="288.3" font-family="Liberation Sans" font-size="9.9" letter-spacing="0.5" fill="#A4DCDC">1920</text>
<text x="1109.6" y="288.3" font-family="Liberation Sans" font-size="9.9" letter-spacing="0.5" fill="#A4DCDC">2011</text>
<text x="1147.5" y="288.3" font-family="Liberation Sans" font-size="9.9" letter-spacing="0.5" fill="#A4DCDC">2102</text>
<text x="1185.5" y="288.3" font-family="Liberation Sans" font-size="9.9" letter-spacing="0.5" fill="#A4DCDC">2194</text>
<text x="1223.5" y="288.3" font-family="Liberation Sans" font-size="9.9" letter-spacing="0.5" fill="#A4DCDC">2285</text>
<text x="1261.5" y="288.3" font-family="Liberation Sans" font-size="9.9" letter-spacing="0.5" fill="#A4DCDC">2377</text>
<text x="1299.5" y="288.3" font-family="Liberation Sans" font-size="9.9" letter-spacing="0.5" fill="#A4DCDC">2468</text>
<text x="1337.4" y="288.3" font-family="Liberation Sans" font-size="9.9" letter-spacing="0.5" fill="#A4DCDC">2559</text>
<text x="1375.4" y="288.3" font-family="Liberation Sans" font-size="9.9" letter-spacing="0.5" fill="#A4DCDC">2651</text>
<text x="1413.4" y="288.3" font-family="Liberation Sans" font-size="9.9" letter-spacing="0.5" fill="#A4DCDC">2742</text>
<path d="M49 298.5 H53.5 M49 302.3 H53.5 M49 306.1 H53.5 M46.5 309.9 H53.5 M49 313.6 H53.5 M49 317.4 H53.5 M49 321.2 H53.5 M49 325.0 H53.5 M38 328.8 H53.5 M49 332.6 H53.5 M49 336.4 H53.5 M49 340.2 H53.5 M49 344.0 H53.5 M46.5 347.8 H53.5 M49 351.5 H53.5 M49 355.3 H53.5 M49 359.1 H53.5 M49 362.9 H53.5 M38 366.7 H53.5 M49 370.5 H53.5 M49 374.3 H53.5 M49 378.1 H53.5 M49 381.9 H53.5 M46.5 385.7 H53.5 M49 389.4 H53.5 M49 393.2 H53.5 M49 397.0 H53.5 M49 400.8 H53.5 M38 404.6 H53.5 M49 408.4 H53.5 M49 412.2 H53.5 M49 416.0 H53.5 M49 419.8 H53.5 M46.5 423.6 H53.5 M49 427.3 H53.5 M49 431.1 H53.5 M49 434.9 H53.5 M49 438.7 H53.5 M38 442.5 H53.5 M49 446.3 H53.5 M49 450.1 H53.5 M49 453.9 H53.5 M49 457.7 H53.5 M46.5 461.5 H53.5 M49 465.2 H53.5 M49 469.0 H53.5 M49 472.8 H53.5 M49 476.6 H53.5 M38 480.4 H53.5 M49 484.2 H53.5 M49 488.0 H53.5 M49 491.8 H53.5 M49 495.6 H53.5 M46.5 499.4 H53.5 M49 503.1 H53.5 M49 506.9 H53.5 M49 510.7 H53.5 M49 514.5 H53.5 M38 518.3 H53.5 M49 522.1 H53.5 M49 525.9 H53.5 M49 529.7 H53.5 M49 533.5 H53.5 M46.5 537.2 H53.5 M49 541.0 H53.5 M49 544.8 H53.5 M49 548.6 H53.5 M49 552.4 H53.5 M38 556.2 H53.5 M49 560.0 H53.5 M49 563.8 H53.5 M49 567.6 H53.5 M49 571.4 H53.5 M46.5 575.1 H53.5 M49 578.9 H53.5 M49 582.7 H53.5 M49 586.5 H53.5 M49 590.3 H53.5 M38 594.1 H53.5 M49 597.9 H53.5 M49 601.7 H53.5 M49 605.5 H53.5 M49 609.3 H53.5 M46.5 613.0 H53.5 M49 616.8 H53.5 M49 620.6 H53.5 M49 624.4 H53.5 M49 628.2 H53.5 M38 632.0 H53.5 M49 635.8 H53.5 M49 639.6 H53.5 M49 643.4 H53.5 M49 647.2 H53.5 M46.5 651.0 H53.5 M49 654.7 H53.5 M49 658.5 H53.5 M49 662.3 H53.5 M49 666.1 H53.5 M38 669.9 H53.5 M49 673.7 H53.5 M49 677.5 H53.5 M49 681.3 H53.5 M49 685.1 H53.5 M46.5 688.9 H53.5 M49 692.6 H53.5 M49 696.4 H53.5 M49 700.2 H53.5 M49 704.0 H53.5 M38 707.8 H53.5 M49 711.6 H53.5 M49 715.4 H53.5 M49 719.2 H53.5 M49 723.0 H53.5 M46.5 726.8 H53.5 M49 730.5 H53.5 M49 734.3 H53.5 M49 738.1 H53.5 M49 741.9 H53.5 M38 745.7 H53.5 M49 749.5 H53.5 M49 753.3 H53.5 M49 757.1 H53.5 M49 760.9 H53.5 M46.5 764.7 H53.5 M49 768.4 H53.5 M49 772.2 H53.5 M49 776.0 H53.5 M49 779.8 H53.5 M38 783.6 H53.5 M49 787.4 H53.5 M49 791.2 H53.5 M49 795.0 H53.5 M49 798.8 H53.5 M46.5 802.5 H53.5 M49 806.3 H53.5 M49 810.1 H53.5 M49 813.9 H53.5 M49 817.7 H53.5 M38 821.5 H53.5 M49 825.3 H53.5 M49 829.1 H53.5 M49 832.9 H53.5 M49 836.7 H53.5 M46.5 840.5 H53.5 M49 844.2 H53.5 M49 848.0 H53.5 M49 851.8 H53.5 M49 855.6 H53.5 M38 859.4 H53.5 M49 863.2 H53.5 M49 867.0 H53.5 M49 870.8 H53.5 M49 874.6 H53.5 M46.5 878.3 H53.5 M49 882.1 H53.5 M49 885.9 H53.5 M49 889.7 H53.5 M49 893.5 H53.5 M38 897.3 H53.5 M49 901.1 H53.5 M49 904.9 H53.5 M49 908.7 H53.5 M49 912.5 H53.5 M46.5 916.2 H53.5 M49 920.0 H53.5 M49 923.8 H53.5 M49 927.6 H53.5 M49 931.4 H53.5 M38 935.2 H53.5 M49 939.0 H53.5 M49 942.8 H53.5 M49 946.6 H53.5 M49 950.4 H53.5 M46.5 954.2 H53.5" stroke="#C8C8C8" stroke-width="1" fill="none"/>
<text transform="translate(47,327.8) rotate(-90)" font-family="Liberation Sans" font-size="9.9" letter-spacing="0.5" fill="#A4DCDC">823</text>
<text transform="translate(47,365.7) rotate(-90)" font-family="Liberation Sans" font-size="9.9" letter-spacing="0.5" fill="#A4DCDC">731</text>
<text transform="translate(47,403.6) rotate(-90)" font-family="Liberation Sans" font-size="9.9" letter-spacing="0.5" fill="#A4DCDC">640</text>
<text transform="translate(47,441.5) rotate(-90)" font-family="Liberation Sans" font-size="9.9" letter-spacing="0.5" fill="#A4DCDC">548</text>
<text transform="translate(47,479.4) rotate(-90)" font-family="Liberation Sans" font-size="9.9" letter-spacing="0.5" fill="#A4DCDC">457</text>
<text transform="translate(47,517.3) rotate(-90)" font-family="Liberation Sans" font-size="9.9" letter-spacing="0.5" fill="#A4DCDC">366</text>
<text transform="translate(47,555.2) rotate(-90)" font-family="Liberation Sans" font-size="9.9" letter-spacing="0.5" fill="#A4DCDC">274</text>
<text transform="translate(47,593.1) rotate(-90)" font-family="Liberation Sans" font-size="9.9" letter-spacing="0.5" fill="#A4DCDC">183</text>
<text transform="translate(47,631.0) rotate(-90)" font-family="Liberation Sans" font-size="9.9" letter-spacing="0.5" fill="#A4DCDC">91</text>
<text transform="translate(47,668.9) rotate(-90)" font-family="Liberation Sans" font-size="9.9" letter-spacing="0.5" fill="#A4DCDC">0</text>
<text transform="translate(47,706.8) rotate(-90)" font-family="Liberation Sans" font-size="9.9" letter-spacing="0.5" fill="#A4DCDC">-91</text>
<text transform="translate(47,744.7) rotate(-90)" font-family="Liberation Sans" font-size="9.9" letter-spacing="0.5" fill="#A4DCDC">-183</text>
<text transform="translate(47,782.6) rotate(-90)" font-family="Liberation Sans" font-size="9.9" letter-spacing="0.5" fill="#A4DCDC">-274</text>
<text transform="translate(47,820.5) rotate(-90)" font-family="Liberation Sans" font-size="9.9" letter-spacing="0.5" fill="#A4DCDC">-366</text>
<text transform="translate(47,858.4) rotate(-90)" font-family="Liberation Sans" font-size="9.9" letter-spacing="0.5" fill="#A4DCDC">-457</text>
<text transform="translate(47,896.3) rotate(-90)" font-family="Liberation Sans" font-size="9.9" letter-spacing="0.5" fill="#A4DCDC">-548</text>
<text transform="translate(47,934.2) rotate(-90)" font-family="Liberation Sans" font-size="9.9" letter-spacing="0.5" fill="#A4DCDC">-640</text>
<text transform="translate(47,972.1) rotate(-90)" font-family="Liberation Sans" font-size="9.9" letter-spacing="0.5" fill="#A4DCDC">-731</text>
<path d="M273 772.5 L920.5 401.5 L1208 566.5 L561 937.5 Z M273 669.5 L273 772.5 M920.5 298.5 L920.5 401.5 M1208 463.5 L1208 566.5 M561 834.5 L561 937.5" stroke="#3060D0" stroke-width="1" fill="none"/>
<path d="M273 669.5 L920.5 298.5 L1208 463.5 L561 834.5 Z" stroke="#3058B8" stroke-width="1.3" fill="none"/>
<path d="M273 669.5 L920.5 298.5 L1208 463.5 L561 834.5 Z" stroke="#E0D47C" stroke-width="1.3" fill="none" stroke-dasharray="3 2"/>
<path d="M273 651 V669" stroke="#E02020" stroke-width="2"/>
<path d="M273 669.5 L287 661.5 M273 669.5 L287 677.5" stroke="#C05050" stroke-width="1.2"/>
<text x="267.3" y="648.8" font-family="Liberation Sans" font-size="12.6" fill="#E02020" stroke="#E02020" stroke-width="0.5">Z</text>
<text x="278.6" y="657.9" font-family="Liberation Sans" font-size="12.6" fill="#E02020" stroke="#E02020" stroke-width="0.5">Y</text>
<text x="278.6" y="691.1" font-family="Liberation Sans" font-size="12.6" fill="#E02020" stroke="#E02020" stroke-width="0.5">X</text>
<path d="M335 683.5 H345.5 M340.5 678 V688.5" stroke="#A88848" stroke-width="1"/>
</svg><svg class="a" style="left:0;top:276px" width="38" height="682" viewBox="0 276 38 682">
<defs><linearGradient id="bg" x1="0" y1="0" x2="0" y2="1"><stop offset="0" stop-color="#FFFFFF"/><stop offset="0.5" stop-color="#F0EFEC"/><stop offset="1" stop-color="#D0CEC8"/></linearGradient></defs>
<path d="M5.8 278 V956" stroke="#FFFFFF" stroke-width="1.2"/><rect x="2" y="278" width="3.2" height="678" fill="#DCD8D0"/>
<rect x="8.5" y="281.00" width="27" height="25" rx="3" fill="url(#bg)" stroke="#1A1A78" stroke-width="1.3"/>
<g transform="translate(22,293.5)"><path d="M-9 3 L-3 -4 H8 L2 3 Z" fill="#808090" stroke="#2020C0" stroke-width="1.3"/><path d="M-9 3 H2 V8 H-9 Z" fill="#fff" stroke="#2020C0" stroke-width="1.3"/><path d="M2 3 L8 -4 V1 L2 8 Z" fill="#1818B0" stroke="#2020C0"/></g>
<rect x="8.5" y="307.45" width="27" height="25" rx="3" fill="url(#bg)" stroke="#1A1A78" stroke-width="1.3"/>
<g transform="translate(22,319.95)"><path d="M-9 8 L-4 3" stroke="#1818A0" stroke-width="2.6"/><circle cx="1" cy="-2" r="6" fill="#fff" stroke="#303030" stroke-width="1.3"/>
<circle cx="1" cy="-2" r="5" fill="#F0A0A0"/><circle cx="-1" cy="-4" r="0.9" fill="#E02020"/><circle cx="3" cy="-4" r="0.9" fill="#E02020"/><circle cx="-1" cy="0" r="0.9" fill="#E02020"/><circle cx="3" cy="0" r="0.9" fill="#E02020"/><circle cx="1" cy="-2" r="0.9" fill="#F0F060"/>
</g>
<rect x="8.5" y="333.90" width="27" height="25" rx="3" fill="url(#bg)" stroke="#1A1A78" stroke-width="1.3"/>
<g transform="translate(22,346.4)"><path d="M-9 8 L-4 3" stroke="#1818A0" stroke-width="2.6"/><circle cx="1" cy="-2" r="6" fill="#fff" stroke="#303030" stroke-width="1.3"/>
<path d="M-2 -5 H3 L4 -4 V1 H-2 Z" fill="#fff" stroke="#303030" stroke-width="0.8"/>
</g>
<rect x="8.5" y="360.35" width="27" height="25" rx="3" fill="url(#bg)" stroke="#1A1A78" stroke-width="1.3"/>
<g transform="translate(22,372.85)"><path d="M-9 8 L-4 3" stroke="#1818A0" stroke-width="2.6"/><circle cx="1" cy="-2" r="6" fill="#fff" stroke="#303030" stroke-width="1.3"/>
<rect x="-2.5" y="-5.5" width="7" height="7" fill="none" stroke="#3030C0" stroke-width="0.7" stroke-dasharray="1 1"/><rect x="0" y="-3" width="2.5" height="2.5" fill="#E00000"/>
</g>
<rect x="8.5" y="386.80" width="27" height="25" rx="3" fill="url(#bg)" stroke="#1A1A78" stroke-width="1.3"/>
<g transform="translate(22,399.3)" fill="#1818C0" stroke="#1818C0"><path d="M-8 0 H8 M0 -8 V8" stroke-width="1.4"/><path d="M-9 0 L-6 -2.5 V2.5Z M9 0 L6 -2.5 V2.5Z M0 -9 L-2.5 -6 H2.5Z M0 9 L-2.5 6 H2.5Z"/></g>
<rect x="8.5" y="413.25" width="27" height="25" rx="3" fill="url(#bg)" stroke="#1A1A78" stroke-width="1.3"/>
<g transform="translate(22,425.75)"><path d="M-9 8 L-4 3" stroke="#1818A0" stroke-width="2.6"/><circle cx="1" cy="-2" r="6" fill="#fff" stroke="#303030" stroke-width="1.3"/>
<path d="M-2.5 -2 H4.5 M1 -5.5 V1.5" stroke="#2020B0" stroke-width="1.3"/>
</g>
<rect x="8.5" y="439.70" width="27" height="25" rx="3" fill="url(#bg)" stroke="#1A1A78" stroke-width="1.3"/>
<g transform="translate(22,452.2)"><path d="M-9 8 L-4 3" stroke="#1818A0" stroke-width="2.6"/><circle cx="1" cy="-2" r="6" fill="#fff" stroke="#303030" stroke-width="1.3"/>
<path d="M-2.5 -2 H4.5" stroke="#303030" stroke-width="1.3"/>
</g>
<rect x="8.5" y="466.15" width="27" height="25" rx="3" fill="url(#bg)" stroke="#1A1A78" stroke-width="1.3"/>
<g transform="translate(22,478.65)"><rect x="-8" y="-8" width="16" height="16" fill="none" stroke="#2020B0" stroke-width="1.3"/><path d="M-4 0 H4 M0 -4 V4" stroke="#E00000" stroke-width="1.3"/></g>
<rect x="8.5" y="492.60" width="27" height="25" rx="3" fill="url(#bg)" stroke="#1A1A78" stroke-width="1.3"/>
<g transform="translate(22,505.1)"><path d="M-9 -5 L-5 -9 H9 V5 L5 9 H-9 Z M-9 -5 H5 V9 M5 -5 L9 -9" fill="none" stroke="#3030B0" stroke-width="0.9" stroke-dasharray="1 1"/>
<path d="M-9 -3 L-4 -7 M-9 -3 H-3" stroke="#E01010" stroke-width="2"/><path d="M-2 -8 H4" stroke="#20A020" stroke-width="1.6"/>
</g>
<rect x="8.5" y="519.05" width="27" height="25" rx="3" fill="url(#bg)" stroke="#1A1A78" stroke-width="1.3"/>
<g transform="translate(22,531.55)"><path d="M-9 -5 L-5 -9 H9 V5 L5 9 H-9 Z M-9 -5 H5 V9 M5 -5 L9 -9" fill="none" stroke="#3030B0" stroke-width="0.9" stroke-dasharray="1 1"/>
<rect x="-3" y="-2" width="5" height="5" fill="#10A010"/><path d="M-8 3 V8 H-2" stroke="#E01010" stroke-width="1.8" fill="none"/>
</g>
<rect x="8.5" y="545.50" width="27" height="25" rx="3" fill="url(#bg)" stroke="#1A1A78" stroke-width="1.3"/>
<g transform="translate(22,558.0)"><path d="M-9 -5 L-5 -9 H9 V5 L5 9 H-9 Z M-9 -5 H5 V9 M5 -5 L9 -9" fill="none" stroke="#3030B0" stroke-width="0.9" stroke-dasharray="1 1"/>
<path d="M7 2 V8 L3 7" stroke="#E01010" stroke-width="1.8" fill="none"/><path d="M7 -4 V2" stroke="#20A020" stroke-width="1.6"/>
</g>
<rect x="8.5" y="571.95" width="27" height="25" rx="3" fill="url(#bg)" stroke="#1A1A78" stroke-width="1.3"/>
<g transform="translate(22,584.45)"><path d="M0 -12 L-10 -2 L0 8 L10 -2 Z M-10 -2 V3 L0 13 L10 3 V-2 M0 8 V13" fill="none" stroke="#2020B0" stroke-width="0.9"/>
<g transform="translate(0,-2) rotate(-135)"><path d="M-4 -2 H1 V-5 L6 0 L1 5 V2 H-4 Z" fill="#F01010"/></g></g>
<rect x="8.5" y="598.40" width="27" height="25" rx="3" fill="url(#bg)" stroke="#1A1A78" stroke-width="1.3"/>
<g transform="translate(22,610.9)"><path d="M0 -12 L-10 -2 L0 8 L10 -2 Z M-10 -2 V3 L0 13 L10 3 V-2 M0 8 V13" fill="none" stroke="#2020B0" stroke-width="0.9"/>
<g transform="translate(0,-2) rotate(-45)"><path d="M-4 -2 H1 V-5 L6 0 L1 5 V2 H-4 Z" fill="#F01010"/></g></g>
<rect x="8.5" y="624.85" width="27" height="25" rx="3" fill="url(#bg)" stroke="#1A1A78" stroke-width="1.3"/>
<g transform="translate(22,637.3499999999999)"><path d="M0 -12 L-10 -2 L0 8 L10 -2 Z M-10 -2 V3 L0 13 L10 3 V-2 M0 8 V13" fill="none" stroke="#2020B0" stroke-width="0.9"/>
<g transform="translate(0,-2) rotate(45)"><path d="M-4 -2 H1 V-5 L6 0 L1 5 V2 H-4 Z" fill="#F01010"/></g></g>
<rect x="8.5" y="651.30" width="27" height="25" rx="3" fill="url(#bg)" stroke="#1A1A78" stroke-width="1.3"/>
<g transform="translate(22,663.8)"><path d="M0 -12 L-10 -2 L0 8 L10 -2 Z M-10 -2 V3 L0 13 L10 3 V-2 M0 8 V13" fill="none" stroke="#2020B0" stroke-width="0.9"/>
<g transform="translate(0,-2) rotate(135)"><path d="M-4 -2 H1 V-5 L6 0 L1 5 V2 H-4 Z" fill="#F01010"/></g></g>
</svg><!-- left tabs -->
<svg class="a" style="left:0;top:252px" width="620" height="28" viewBox="0 252 620 28">
<!-- page top line -->
<path d="M139 278.5 H1444" stroke="#FFFFFF"/>
<!-- tab1 selected -->
<path d="M6.5 279 V259 L8.5 257 H137.5" stroke="#FFFFFF" fill="#D8D5CE"/>
<rect x="7" y="257.5" width="131" height="22" fill="#D8D5CE"/>
<path d="M6.5 279 V259 L8.5 256.7 H137.5" stroke="#FFFFFF" fill="none"/>
<path d="M138.5 257 V279" stroke="#404040"/>
<!-- tab2 -->
<path d="M139.5 278 V259.5 L140.5 258.5 H260" stroke="#FFFFFF" fill="none"/>
<path d="M261 258.5 V278" stroke="#404040"/><path d="M260 259.5 V278" stroke="#505050"/>
<!-- tab3 -->
<path d="M262.5 278 V259.5 L263.5 258.5 H354" stroke="#FFFFFF" fill="none"/>
<path d="M355 258.5 V278" stroke="#404040"/><path d="M354 259.5 V278" stroke="#505050"/>
<!-- tab4 -->
<path d="M356.5 278 V259.5 L357.5 258.5 H482" stroke="#FFFFFF" fill="none"/>
<path d="M483 258.5 V278" stroke="#404040"/><path d="M482 259.5 V278" stroke="#505050"/>
<!-- tab5 -->
<path d="M484.5 278 V259.5 L485.5 258.5 H605" stroke="#FFFFFF" fill="none"/>
<path d="M606 258.5 V278" stroke="#404040"/><path d="M605 259.5 V278" stroke="#505050"/>
<!-- icons -->
<rect x="12" y="261" width="12" height="11.5" fill="#E0B0E0"/><rect x="13" y="262" width="11" height="10.5" fill="#60C060"/>
<path d="M13 261.5 H23.5 V272 M15 264 H21.5 V270.5 H15 V265.5 H19.5 V268.5 H17" stroke="#2E7E2E" stroke-width="0.9" fill="none"/>
<rect x="145" y="262" width="12.5" height="11.5" fill="#C8DCF8" stroke="#4060A0"/><rect x="145" y="262" width="12.5" height="3" fill="#3070D0"/>
<path d="M148 271 L155 262.5" stroke="#F0A020" stroke-width="2.2"/><path d="M155 262.5 L157 260.5" stroke="#40C040" stroke-width="2"/>
<circle cx="274.5" cy="267.8" r="7" fill="#F4C8C8"/><circle cx="274.5" cy="267.8" r="6" fill="#E03030"/><circle cx="274.5" cy="267.8" r="3.5" fill="#fff"/><path d="M272.5 267.8 H276.5 M274.5 265.8 V269.8" stroke="#E03030" stroke-width="1.3"/>
<circle cx="368" cy="267.5" r="6.3" fill="#30A040"/><text x="368" y="271.5" font-family="Liberation Sans" font-size="10" font-weight="bold" fill="#fff" text-anchor="middle">E</text>
<path d="M490 263 H496 L499 266 V274 H490 Z" fill="#C0E0F8" stroke="#5080C0" stroke-width="0.9"/><path d="M494 261 H500 L503 264 V272 H494 Z" fill="#E0F0FF" stroke="#5080C0" stroke-width="0.9"/>
</svg>
<div class="t s" style="left:28px;top:262px;color:#202020;font-size:11.3px">Орб. обраб.</div>
<div class="t s" style="left:161px;top:264px;color:#202020;font-size:11.3px">Журн. сис.</div>
<div class="t s" style="left:284px;top:264px;color:#202020;font-size:11.3px">Сост. IO</div>
<div class="t s" style="left:378px;top:264px;color:#202020;font-size:11.3px">Ред. кодов</div>
<div class="t s" style="left:507px;top:264px;color:#202020;font-size:11.3px">Упр. файл.</div>
<div class="t s" style="left:1366px;top:259px;color:#40B8F0;font-size:18.6px;line-height:18px;font-weight:bold;font-style:italic">P20A std</div>
<!-- tab page bottom -->
<div class="hl" style="left:139px;top:278px;width:1306px;background:#FFFFFF"></div>
<div class="hl" style="left:3px;top:955px;width:1442px;background:#404040"></div>
<div class="vl" style="left:1444px;top:280px;height:676px;background:#404040"></div>
<!-- right tabs -->
<svg class="a" style="left:1450px;top:252px" width="378" height="710" viewBox="1450 252 378 710">
<path d="M1559 278.5 H1819.5 V956" stroke="#FFFFFF" fill="none"/>
<path d="M1820.5 279 V957" stroke="#909090"/>
<path d="M1455.5 279 V957" stroke="#FFFFFF"/>
<path d="M1455 956.5 H1821" stroke="#404040"/>
<path d="M1453 958 H1824" stroke="#F0C050" stroke-width="2"/>
<rect x="1456" y="256.5" width="102.5" height="23" fill="#D8D5CE"/>
<path d="M1455.5 279 V258.5 L1457.5 256.5 H1558" stroke="#FFFFFF" fill="none"/>
<path d="M1559 256.5 V279" stroke="#404040"/>
<path d="M1560 278 V259.5 L1561 258.5 H1732" stroke="#FFFFFF" fill="none"/>
<path d="M1733 258.5 V278" stroke="#404040"/><path d="M1732 259.5 V278" stroke="#505050"/>
<path d="M1734.5 278 V259.5 L1735.5 258.5 H1792" stroke="#FFFFFF" fill="none"/>
<path d="M1793 258.5 V278" stroke="#404040"/><path d="M1792 259.5 V278" stroke="#505050"/>
<!-- groupbox -->
<rect x="1465.5" y="290.5" width="348" height="328" fill="none" stroke="#A0A0A0"/>
<rect x="1466.5" y="291.5" width="348" height="328" fill="none" stroke="#FFFFFF" stroke-opacity="0.8"/>
<rect x="1465.5" y="290.5" width="348" height="328" fill="none" stroke="#A0A0A0"/>
<!-- icons -->
<defs><linearGradient id="hg" x1="0" y1="0" x2="0" y2="1"><stop offset="0" stop-color="#F8C890"/><stop offset="0.6" stop-color="#E88040"/><stop offset="1" stop-color="#A04010"/></linearGradient></defs>
<path d="M1459.2 266.6 L1462.7 260.3 H1467.8 L1473.6 264.3 V272.4 L1464.3 271.3 Z" fill="url(#hg)"/>
<circle cx="1463.5" cy="265" r="2" fill="#701808" opacity="0.85"/>
<path d="M1568 260.5 H1575 V266 L1573 268 V272 H1570 V268 L1568 266 Z" fill="#F04010"/><path d="M1566 275 L1568 272 H1577 L1575 275 Z" fill="#40B040"/>
<text x="1740" y="274" font-family="Liberation Sans" font-weight="bold" font-size="12" fill="#208848">G</text>
</svg>
<div class="t s" style="left:1475px;top:262px;color:#202020;font-size:11.3px">Вручную</div>
<div class="t s" style="left:1581px;top:264px;color:#202020;font-size:11.3px">Автоматически</div>
<div class="t s" style="left:1757px;top:264px;color:#202020;font-size:11.3px">Код</div>
<div class="radio" style="left:1477px;top:302px"></div>
<div class="radio" style="left:1477px;top:332px"></div>
<div class="a" style="left:1481px;top:336px;width:4px;height:4px;border-radius:50%;background:#000"></div>
<div class="radio" style="left:1477px;top:361px"></div>
<div class="radio" style="left:1477px;top:390px"></div>
<div class="radio" style="left:1477px;top:418px"></div>
<div class="radio" style="left:1477px;top:447px"></div>
<div class="radio" style="left:1477px;top:475px"></div>
<div class="radio" style="left:1477px;top:504px"></div>
<div class="radio" style="left:1477px;top:532px"></div>
<div class="radio" style="left:1477px;top:560px"></div>
<div class="radio" style="left:1477px;top:589px"></div>
<div class="t" style="left:1493px;top:303px">Маховик (<u>H</u>)</div>
<div class="t" style="left:1493px;top:333px">Непрерь</div>
<div class="t" style="left:1493px;top:362px">0.01mm(<u>K</u>)</div>
<div class="t" style="left:1493px;top:391px">0.05mm</div>
<div class="t" style="left:1493px;top:419px">0.1 mm</div>
<div class="t" style="left:1493px;top:448px">0.5 mm</div>
<div class="t" style="left:1493px;top:476px">1.0 mm</div>
<div class="t" style="left:1493px;top:505px">5.0 mm</div>
<div class="t" style="left:1493px;top:533px">10.0mm</div>
<div class="t" style="left:1493px;top:561px">15.0mm</div>
<div class="t" style="left:1493px;top:590px">100.000</div>
<div class="t" style="left:1543px;top:588px">mm</div>
<div class="rb" style="left:1561px;top:586px;width:44px;height:21px;padding-top:4px;text-align:left;text-indent:3px">(<u>Z</u>)&gt;&gt;</div>
<div class="jb" style="left:1627px;top:330px;width:64px;height:38px;padding-top:13px;padding-right:9px;letter-spacing:-0.2px">Y+(<u>8</u>)</div>
<div class="jb" style="left:1700px;top:330px;width:64px;height:38px;padding-top:13px;padding-right:9px;letter-spacing:-0.2px">Z+(<u>9</u>)</div>
<div class="jb" style="left:1554px;top:379px;width:64px;height:39px;padding-top:13px;padding-right:9px;letter-spacing:-0.2px">X-(<u>4</u>)</div>
<div class="cb" style="left:1628px;top:392px;width:12px;height:12px"></div>
<div class="t" style="left:1644px;top:392px">Ручная вы:</div>
<div class="jb" style="left:1700px;top:379px;width:64px;height:39px;padding-top:13px;padding-right:9px;letter-spacing:-0.2px">X+(<u>6</u>)</div>
<div class="jb" style="left:1554px;top:429px;width:64px;height:39px;padding-top:13px;padding-right:9px;letter-spacing:-0.2px">Z-(<u>1</u>)</div>
<div class="jb" style="left:1627px;top:429px;width:64px;height:39px;padding-top:13px;padding-right:9px;letter-spacing:-0.2px">Y-(<u>2</u>)</div>
<!-- status bar -->
<div class="hl" style="left:2px;top:961px;width:1822px;background:#FFFFFF"></div>
<div class="hl" style="left:2px;top:963px;width:1822px;background:#A4A098"></div>
<div class="a" style="left:3px;top:965px;width:1253px;height:17px;border:1px solid;border-color:#A4A098 #FFFFFF #FFFFFF #A4A098"></div>
<div class="a" style="left:1257px;top:965px;width:245px;height:17px;border:1px solid;border-color:#A4A098 #FFFFFF #FFFFFF #A4A098"></div>
<div class="a" style="left:1502px;top:965px;width:110px;height:17px;border:1px solid;border-color:#A4A098 #FFFFFF #FFFFFF #A4A098"></div>
<div class="a" style="left:1613px;top:965px;width:149px;height:17px;border:1px solid;border-color:#A4A098 #FFFFFF #FFFFFF #A4A098"></div>
<div class="a" style="left:1764px;top:965px;width:30px;height:17px;border:1px solid;border-color:#A4A098 #FFFFFF #FFFFFF #A4A098"></div>
<div class="a" style="left:1795px;top:965px;width:29px;height:17px;border:1px solid;border-color:#A4A098 #FFFFFF #FFFFFF #A4A098"></div>
<div class="t" style="left:1259px;top:968px">Reset Finished...</div>
<div class="t" style="left:1504px;top:968px">State:--...</div>
<div class="t" style="left:1615px;top:968px">Code Lines:</div>
<div class="t" style="left:1796px;top:968px">NUM</div>
<div class="hl" style="left:2px;top:985px;width:1822px;background:#FFFFFF"></div>
<div class="a" style="left:2px;top:986px;width:48px;height:2px;background:#F0F0EC"></div>
<div class="a" style="left:155px;top:986px;width:45px;height:2px;background:#F0F0EC"></div>
<div class="a" style="left:250px;top:986px;width:44px;height:2px;background:#F0F0EC"></div>
<div class="a" style="left:296px;top:986px;width:45px;height:2px;background:#F0F0EC"></div>
<div class="a" style="left:345px;top:986px;width:44px;height:2px;background:#606060"></div>
<div class="a" style="left:1650px;top:986px;width:171px;height:2px;background:#F0F0EC"></div>

</body></html>
